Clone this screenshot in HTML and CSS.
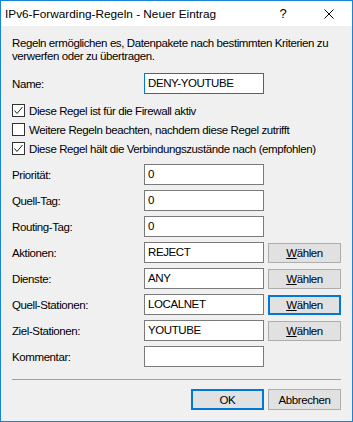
FILE: index.html
```html
<!DOCTYPE html>
<html lang="de">
<head>
    <meta charset="UTF-8">
    <meta name="viewport" content="width=device-width, initial-scale=1.0">
    <title>IPv6-Forwarding-Regeln - Neuer Eintrag</title>
    <link rel="stylesheet" href="styles.css">
</head>
<body>
    <div class="dialog">
        <div class="titlebar">
            <span class="title">IPv6-Forwarding-Regeln - Neuer Eintrag</span>
            <span class="title-btn">?</span>
            <span class="title-btn">
                <svg width="10" height="10" viewBox="0 0 10 10"><path d="M0.5 0.5 L9.5 9.5 M9.5 0.5 L0.5 9.5" stroke="#000" stroke-width="1" fill="none"/></svg>
            </span>
        </div>
        <div class="content">
            <p class="intro">Regeln ermöglichen es, Datenpakete nach bestimmten Kriterien zu<br>verwerfen oder zu übertragen.</p>

            <div class="row first">
                <label class="label">Name:</label>
                <div class="input focused">DENY-YOUTUBE</div>
            </div>

            <div class="checks">
                <div class="check">
                    <span class="box"><svg width="11" height="11" viewBox="0 0 11 11"><path d="M1.5 5.5 L4 8.5 L9.5 2" stroke="#222" stroke-width="1" fill="none"/></svg></span>
                    Diese Regel ist für die Firewall aktiv
                </div>
                <div class="check">
                    <span class="box"></span>
                    Weitere Regeln beachten, nachdem diese Regel zutrifft
                </div>
                <div class="check">
                    <span class="box"><svg width="11" height="11" viewBox="0 0 11 11"><path d="M1.5 5.5 L4 8.5 L9.5 2" stroke="#222" stroke-width="1" fill="none"/></svg></span>
                    Diese Regel hält die Verbindungszustände nach (empfohlen)
                </div>
            </div>

            <div class="row">
                <label class="label">Priorität:</label>
                <div class="input">0</div>
            </div>
            <div class="row">
                <label class="label">Quell-Tag:</label>
                <div class="input">0</div>
            </div>
            <div class="row">
                <label class="label">Routing-Tag:</label>
                <div class="input">0</div>
            </div>
            <div class="row">
                <label class="label">Aktionen:</label>
                <div class="input">REJECT</div>
                <button class="btn"><u>W</u>ählen</button>
            </div>
            <div class="row">
                <label class="label">Dienste:</label>
                <div class="input">ANY</div>
                <button class="btn"><u>W</u>ählen</button>
            </div>
            <div class="row">
                <label class="label">Quell-Stationen:</label>
                <div class="input">LOCALNET</div>
                <button class="btn focused"><u>W</u>ählen</button>
            </div>
            <div class="row">
                <label class="label">Ziel-Stationen:</label>
                <div class="input">YOUTUBE</div>
                <button class="btn"><u>W</u>ählen</button>
            </div>
            <div class="row">
                <label class="label">Kommentar:</label>
                <div class="input"></div>
            </div>

            <div class="separator"></div>

            <div class="actions">
                <button class="btn focused">OK</button>
                <button class="btn">Abbrechen</button>
            </div>
        </div>
    </div>
</body>
</html>
```

FILE: styles.css
```css
:root {
    --window-border: #1883d7;
    --focus-color: #0078d7;
    --dialog-bg: #f0f0f0;
    --input-border: #7a7a7a;
    --btn-bg: #e1e1e1;
    --btn-border: #adadad;
}
body { margin: 0; font-family: "Liberation Sans", Arial, sans-serif; font-size: 11.5px; color: #000; }
.dialog { width: 353px; height: 422px; box-sizing: border-box; border: 1px solid var(--window-border); background-color: var(--dialog-bg); overflow: hidden; }
.titlebar { height: 25px; background-color: #fff; display: flex; align-items: center; padding-left: 4px; }
.title { flex: 1; white-space: nowrap; font-size: 11.8px; }
.title-btn { width: 46px; height: 25px; display: flex; align-items: center; justify-content: center; font-size: 13px; }
.content { padding: 0 11px; letter-spacing: -0.4px; }
.intro { margin: 11px 0 0; line-height: 13px; white-space: nowrap; }
.row { display: flex; align-items: center; height: 21px; margin-top: 5px; }
.row.first { margin-top: 10px; }
.label { width: 132px; flex-shrink: 0; white-space: nowrap; }
.input {
    width: 120px;
    height: 21px;
    box-sizing: border-box;
    border: 1px solid var(--input-border);
    background-color: #fff;
    padding: 0 3px;
    line-height: 19px;
    white-space: nowrap;
}
.input.focused { border-color: var(--focus-color); }
.btn {
    width: 73px;
    height: 20px;
    margin-left: 4px;
    box-sizing: border-box;
    border: 1px solid var(--btn-border);
    background-color: var(--btn-bg);
    font-family: inherit;
    font-size: 11.5px;
    letter-spacing: inherit;
    color: #000;
    padding: 0;
}
.btn.focused { border: 2px solid var(--focus-color); }
.checks { margin-top: 10px; margin-bottom: 9px; }
.check { display: flex; align-items: center; height: 13px; margin-bottom: 6px; white-space: nowrap; }
.check:last-child { margin-bottom: 0; }
.box { width: 13px; height: 13px; box-sizing: border-box; border: 1px solid #333; background-color: #fff; margin-right: 4px; display: flex; flex-shrink: 0; }
.box svg { display: block; }
.separator { height: 1px; background-color: #a0a0a0; margin-top: 12px; }
.actions { display: flex; justify-content: flex-end; margin-top: 9px; }
.actions .btn { height: 21px; }
.actions .btn:first-child { margin-left: 0; }
```
